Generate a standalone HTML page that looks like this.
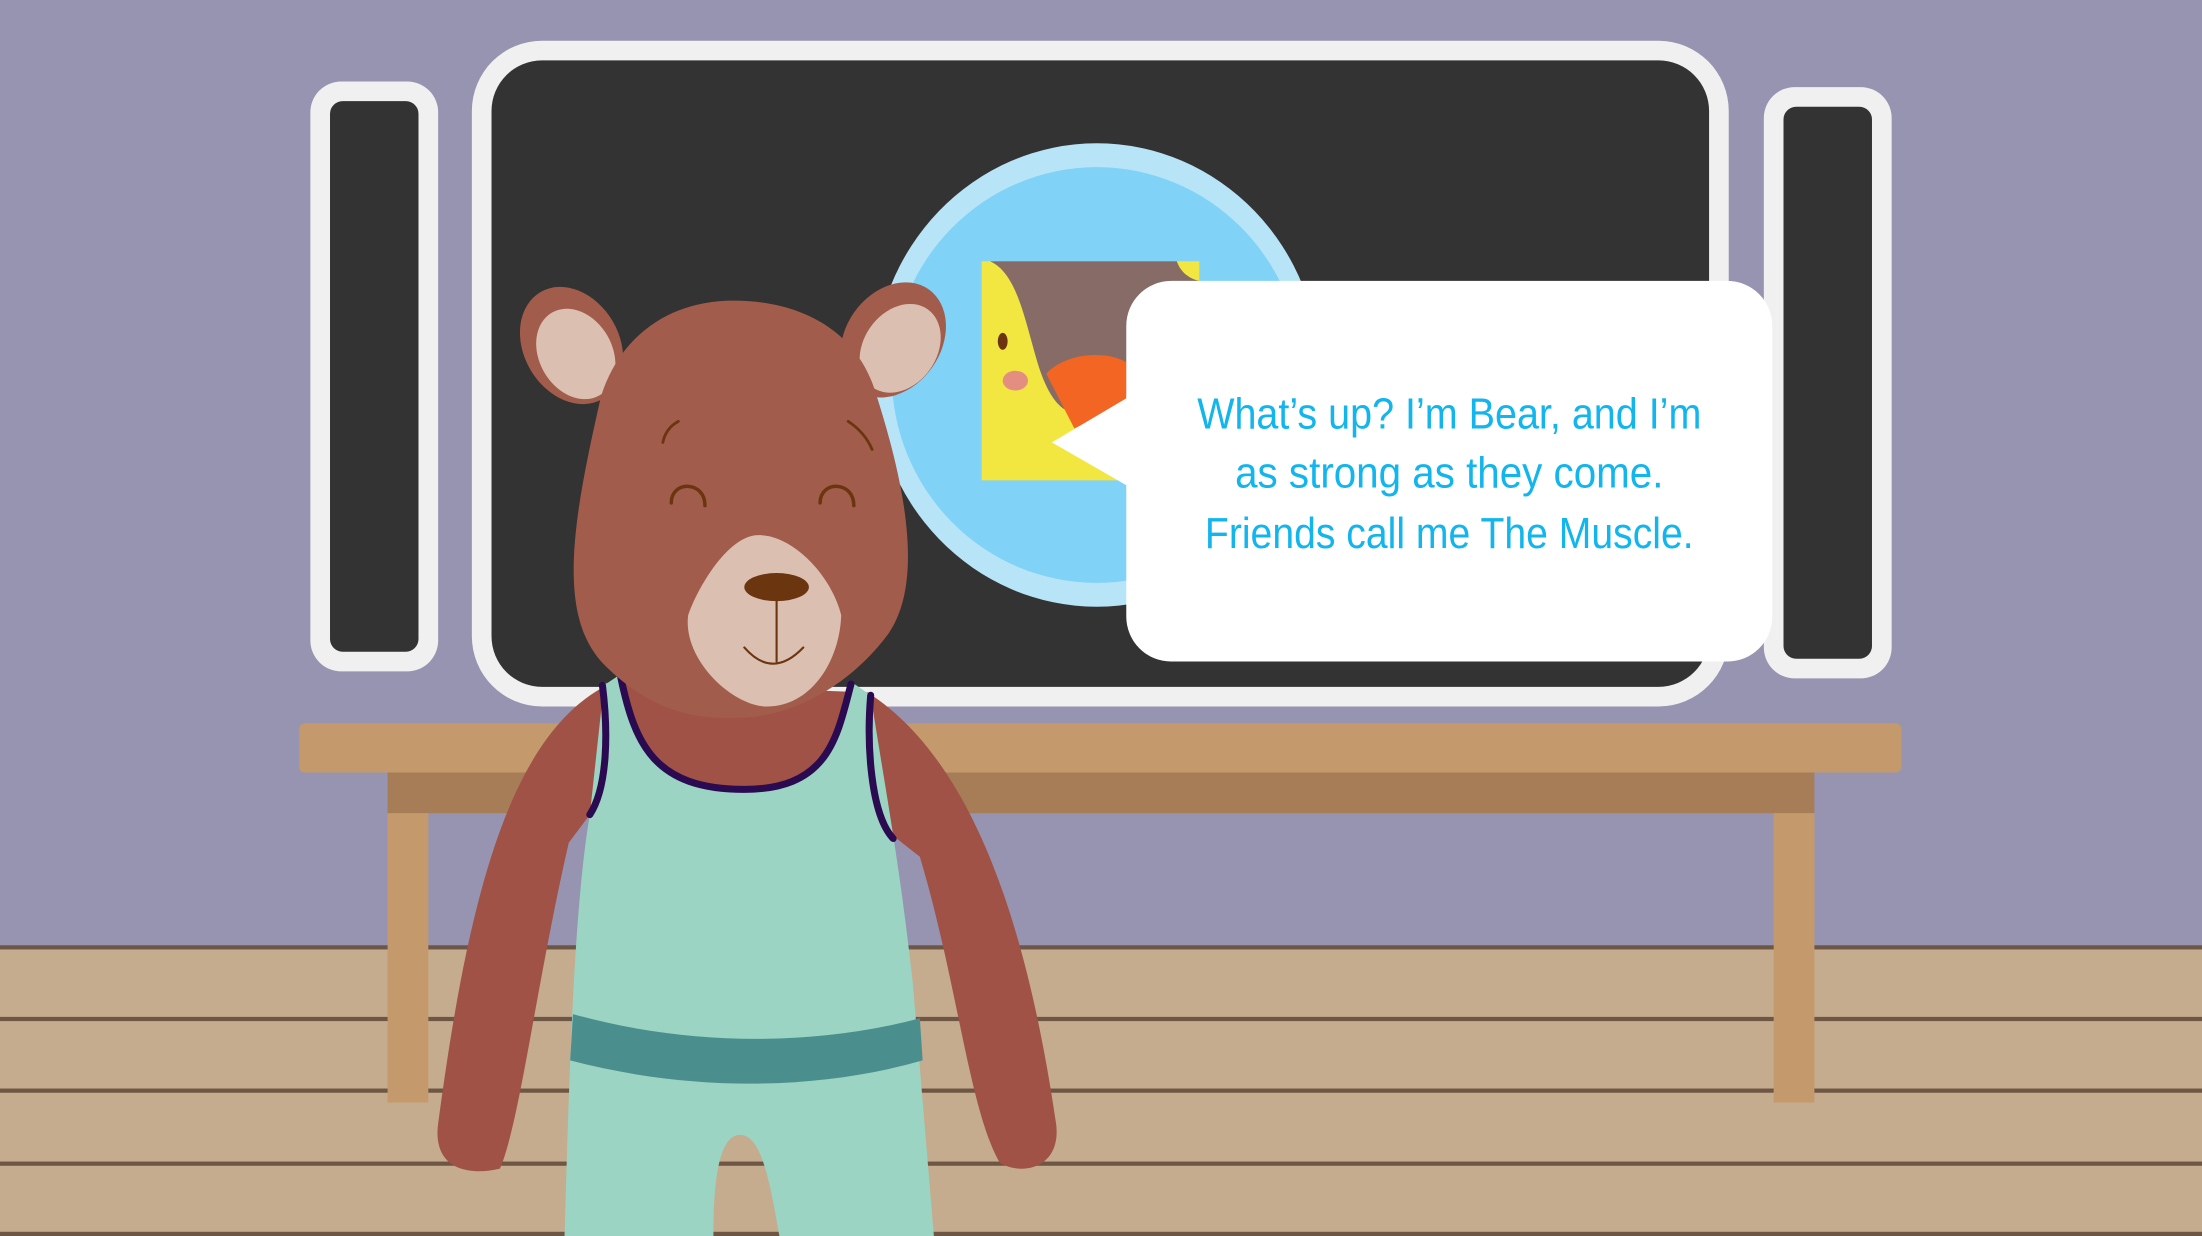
<!DOCTYPE html>
<html><head><meta charset="utf-8"><style>
html,body{margin:0;padding:0;overflow:hidden;background:#9794b1}
svg{display:block}
</style></head><body>
<svg width="2202" height="1236" viewBox="0 0 1568 880" preserveAspectRatio="none" xmlns="http://www.w3.org/2000/svg">
<rect width="1568" height="880" fill="#9794b1"/>
<rect y="675" width="1568" height="205" fill="#c5ac8e"/>
<g fill="#6e5644">
<rect y="673" width="1568" height="3"/><rect y="724" width="1568" height="3"/><rect y="775" width="1568" height="3"/><rect y="827" width="1568" height="3"/><rect y="877" width="1568" height="3"/>
</g>
<rect x="221" y="58" width="91" height="420" rx="22" fill="#f0f0f0"/>
<rect x="235" y="72" width="63" height="392" rx="9" fill="#333"/>
<rect x="1256" y="62" width="91" height="421" rx="22" fill="#f0f0f0"/>
<rect x="1270" y="76" width="63" height="393" rx="9" fill="#333"/>
<rect x="336" y="29" width="895" height="474" rx="50" fill="#f0f0f0"/>
<rect x="350" y="43" width="867" height="446" rx="36" fill="#333"/>
<ellipse cx="781" cy="267" rx="159" ry="165" fill="#b8e4f8"/>
<ellipse cx="781" cy="267" rx="146" ry="148" fill="#80d2f6"/>
<rect x="699" y="186" width="155" height="156" fill="#f2e640"/>
<path d="M705,186 C725,195 730,230 740,262 C750,292 765,306 790,282 L854,282 L854,200 C845,198 840,192 838,186 Z" fill="#876b67"/>
<path d="M745,266 C760,250 790,250 802,258 L802,288 L765,305 Z" fill="#f26522"/>
<ellipse cx="714" cy="243" rx="3.5" ry="6" fill="#6b3510"/>
<ellipse cx="723" cy="271" rx="9" ry="7" fill="#e38e80"/>
<rect x="213" y="515" width="1141" height="35" rx="4" fill="#c49a6c"/>
<rect x="276" y="550" width="1016" height="29" fill="#a67d56"/>
<rect x="276" y="579" width="29" height="206" fill="#c49a6c"/>
<rect x="1263" y="579" width="29" height="206" fill="#c49a6c"/>
<rect x="802" y="200" width="460" height="271" rx="32" fill="#fff"/>
<path d="M803,283 L749,315 L803,346 Z" fill="#fff"/>
<g fill="#12b5ec" font-family="'Comic Sans MS','Liberation Sans Narrow','Liberation Sans',sans-serif" font-size="31" text-anchor="middle">
<text x="1032" y="305" textLength="359" lengthAdjust="spacingAndGlyphs">What’s up? I’m Bear, and I’m</text>
<text x="1032" y="347" textLength="305" lengthAdjust="spacingAndGlyphs">as strong as they come.</text>
<text x="1032" y="390" textLength="348" lengthAdjust="spacingAndGlyphs">Friends call me The Muscle.</text>
</g>
<path d="M432,488 C360,525 332,650 312,800 C308,830 330,838 356,832 C370,800 382,700 405,600 L420,580 Z" fill="#9f5245"/>
<path d="M618,493 C690,540 730,650 752,800 C756,830 730,838 712,828 C690,790 682,700 655,610 L636,595 Z" fill="#9f5245"/>
<path d="M428,486 L620,493 L612,570 L440,570 Z" fill="#9f5245"/>
<path d="M430,488 L442,480 C450,528 470,562 530,562 C588,562 598,520 607,486 L620,495 C630,560 640,610 650,700 L665,880 L555,880 C548,840 542,808 527,808 C512,808 508,840 508,880 L402,880 C405,780 408,650 420,580 Z" fill="#9bd4c2"/>
<path d="M408,722 C490,745 580,745 655,725 L657,755 C580,777 490,777 406,755 Z" fill="#4a8f8e"/>
<g fill="none" stroke="#2a0a50" stroke-width="5" stroke-linecap="round">
<path d="M429,488 C433,520 433,560 420,580"/>
<path d="M620,495 C617,530 620,580 636,597"/>
<path d="M442,482 C452,530 466,562 530,562 C590,562 596,525 606,487"/>
</g>
<ellipse cx="407" cy="246" rx="34" ry="44" transform="rotate(-30 407 246)" fill="#a25c4b"/>
<ellipse cx="410" cy="252" rx="26" ry="34" transform="rotate(-30 410 252)" fill="#dbbfb1"/>
<ellipse cx="636" cy="242" rx="34" ry="44" transform="rotate(35 636 242)" fill="#a25c4b"/>
<ellipse cx="641" cy="248" rx="26" ry="34" transform="rotate(35 641 248)" fill="#dbbfb1"/>
<path d="M428,282 C408,370 395,440 432,475 C468,510 500,512 528,511 C565,510 605,488 632,452 C655,420 650,360 622,275 C608,235 570,214 522,214 C478,214 442,238 428,282 Z" fill="#a25c4b"/>
<path d="M540,381 C518,381 496,420 490,438 C486,470 522,503 546,503 C578,503 598,470 599,438 C592,410 565,381 540,381 Z" fill="#dbbfb1"/>
<ellipse cx="553" cy="418" rx="23" ry="10" fill="#6b3510"/>
<g fill="none" stroke="#6b3510" stroke-linecap="round">
<path d="M553,428 L553,471" stroke-width="1.5"/>
<path d="M530,461 Q550,484 572,461" stroke-width="1.5"/>
<path d="M478,358 C478,342 502,342 502,360" stroke-width="2.5"/>
<path d="M584,358 C584,342 608,342 608,360" stroke-width="2.5"/>
<path d="M472,315 Q474,305 483,300" stroke-width="2"/>
<path d="M604,300 Q616,308 621,320" stroke-width="2"/>
</g>
</svg>
</body></html>
